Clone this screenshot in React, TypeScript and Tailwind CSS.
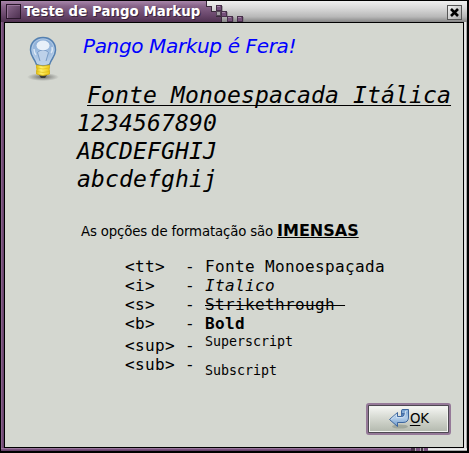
const TILES = [
  [14, 4], [19, 10], [25, 15], [35, 15],
];

function PixelTrail() {
  return (
    <svg width="46" height="21" viewBox="0 0 46 21" shapeRendering="crispEdges" className="shrink-0">
      <defs>
        <linearGradient id="trail" gradientUnits="userSpaceOnUse" x1="0" y1="0" x2="0" y2="21">
          <stop offset="0" stopColor="#a886aa" />
          <stop offset=".25" stopColor="#866388" />
          <stop offset=".65" stopColor="#6b486d" />
          <stop offset="1" stopColor="#503251" />
        </linearGradient>
      </defs>
      <path d="M0 0H4V5H9V10H14V15H19V21H0Z" fill="url(#trail)" />
      <path d="M4.500 0V5.500H9.500V10.500H14.500V15.500H19.500V21" fill="none" stroke="#3b2a3c" />
      <rect x="14" y="10" width="5" height="5" fill="#554657" />
      <rect x="15" y="11" width="3" height="3" fill="#a39da4" />
      {TILES.map(([x, y]) => (
        <g key={`${x}-${y}`}>
          <rect x={x + 1} y={y + 1} width="6" height="5" fill="#777077" opacity=".55" />
          <rect x={x} y={y} width="6" height="6" fill="#47304a" />
          <rect x={x + 1} y={y + 1} width="4" height="4" fill="#75507a" />
          <rect x={x + 1} y={y + 1} width="3" height="1" fill="#a283a5" />
        </g>
      ))}
    </svg>
  );
}

function Bulb() {
  return (
    <svg width="34" height="46" viewBox="0 0 34 46" className="shrink-0">
      <defs>
        <linearGradient id="glass" x2="0" y2="1">
          <stop offset="0" stopColor="#86a9d3" />
          <stop offset=".5" stopColor="#9fbde0" />
          <stop offset="1" stopColor="#c3d7ec" />
        </linearGradient>
        <linearGradient id="brass">
          <stop offset="0" stopColor="#e0bd10" />
          <stop offset=".35" stopColor="#fff06a" />
          <stop offset="1" stopColor="#ecc816" />
        </linearGradient>
        <radialGradient id="shade">
          <stop offset="0" stopColor="#333" stopOpacity=".65" />
          <stop offset="1" stopColor="#333" stopOpacity="0" />
        </radialGradient>
      </defs>
      <ellipse cx="17" cy="41" rx="16" ry="4" fill="url(#shade)" />
      <path d="M13 39h8l-2 3h-4z" fill="#3c3c36" />
      <path d="M4.500 14C4.500 6 10 1.500 17 1.500S29.500 6 29.500 14C29.500 20.500 25.500 22 23.500 28.500Q17 31.500 10.500 28.500C8.500 22 4.500 20.500 4.500 14Z" fill="url(#glass)" stroke="#5580b0" strokeWidth="1.5" />
      <path d="M6 14C6 7 11 3 17 3S28 7 28 14C28 19 24 22 22.500 27.500Q17 29.500 11.500 27.500C10 22 6 19 6 14Z" fill="none" stroke="#b9cfe9" strokeWidth=".8" />
      <path d="M14 25L11.500 16.500L14 14.500H20L22.500 16.500L20 25" fill="#bdd1e9" stroke="#789bc6" strokeWidth="1" />
      <ellipse cx="17" cy="9.500" rx="6.500" ry="5" fill="#e8f0f9" />
      <path d="M8 13q0 4 2 6M26 11q1 4-1 6" fill="none" stroke="#e8f1fa" strokeWidth="1.500" opacity=".8" />
      <path d="M10.500 29Q17 31 23.500 29V32L23 33L23.500 35V38Q17 41 10.500 38V35L11 33L10.500 32Z" fill="url(#brass)" stroke="#d4b012" strokeWidth=".8" />
      <path d="M11 32Q17 34 23 32M11 35.500Q17 37.500 23 35.500" fill="none" stroke="#dcb914" strokeWidth=".6" />
    </svg>
  );
}

function ReturnArrow() {
  return (
    <svg width="22" height="20" viewBox="0 0 22 20" className="shrink-0">
      <defs>
        <linearGradient id="arrow" x2="0" y2="1">
          <stop offset="0" stopColor="#719fd0" />
          <stop offset=".5" stopColor="#b4cfea" />
          <stop offset="1" stopColor="#6c98ca" />
        </linearGradient>
      </defs>
      <ellipse cx="12" cy="17.500" rx="8" ry="2" fill="#7c8479" opacity=".45" />
      <path d="M1.500 10.500L9.500 3.500V7.500H13.500V1.500Q13.500 .5 15 .5H20.500V8Q20.500 13.500 15 13.500H9.500V17.500Z" fill="url(#arrow)" stroke="#3c659d" strokeLinejoin="round" />
      <path d="M13.500 7.500H14.500Q16.500 7 16.500 4.500H13.500" fill="#527fb7" stroke="#3c659d" strokeWidth=".8" />
      <path d="M3 10.500L8.500 5.300V8.600H14.500Q17.500 8 17.500 4V2H19.500" fill="none" stroke="#d3e3f3" strokeWidth=".9" />
    </svg>
  );
}

function TitleBar() {
  return (
    <div className="flex h-[21px] items-center bg-[linear-gradient(#f0f0f0,#d9d9d9_35%,#b8b8b8_75%,#858585)]">
      <div className="flex h-full w-[201px] items-center bg-[linear-gradient(#a886aa,#866388_25%,#6b486d_65%,#503251)] pl-[5px]">
        <div className="h-[15px] w-[15px] border border-[#2b182c] bg-[linear-gradient(135deg,#8a688c,#4d3050)] shadow-[inset_1px_1px_0_#98769a]" />
        <div className="ml-[3px] whitespace-pre text-[13.3px] leading-[20px] font-bold tracking-[0.06px] text-white [text-shadow:1px_1px_0_#3a243b]">Teste de Pango Markup</div>
      </div>
      <PixelTrail />
      <div className="mt-px mr-[5px] ml-auto flex h-[15px] w-[15px] items-center justify-center border border-[#555] bg-[linear-gradient(135deg,#f2f2f2,#aaa)]">
        <svg width="9" height="9" viewBox="0 0 9 9">
          <path d="M1 1L8 8M8 1L1 8" stroke="#000" strokeWidth="2.600" />
        </svg>
      </div>
    </div>
  );
}

const cell = "whitespace-pre";

export default function App() {
  return (
    <div className="flex h-[453px] w-[469px] flex-col bg-black pt-px pr-[2px] pb-[2px] pl-px font-['DejaVu_Sans',sans-serif] text-black">
      <TitleBar />
      <div className="flex h-[426px]">
        <div className="w-[3px] bg-[linear-gradient(90deg,#947296,#79507d_40%,#644067)]" />
        <main className="flex h-[426px] w-[460px] flex-col border border-black bg-[#d4d7d0]">
          <div className="flex h-[347px]">
            <div className="w-[72px] pt-[13px] pl-[21px]"><Bulb /></div>
            <div className="flex flex-col whitespace-pre">
              <div className="mt-[10px] ml-[6px] h-[26px] text-[20px] leading-[26px] tracking-[-0.36px] text-[#0000ff] italic">Pango Markup é Fera!</div>
              <div className="mt-[22px] h-[112px] font-['DejaVu_Sans_Mono',monospace] text-[23px] leading-[28px] tracking-[0.154px] italic">
                <div className="ml-[10px] underline decoration-1 underline-offset-[2px] [text-decoration-skip-ink:none]">Fonte Monoespacada Itálica</div>
                <div>1234567890</div>
                <div>ABCDEFGHIJ</div>
                <div>abcdefghij</div>
              </div>
              <div className="mt-[28px] ml-[4px] flex h-[20px] items-baseline leading-[20px]">
                <span className="text-[13.3px] tracking-[-0.15px]">As opções de formatação são </span>
                <span className="text-[16px] font-bold underline decoration-1 underline-offset-[1px]">IMENSAS</span>
              </div>
              <div className="mt-[16px] ml-[48px] grid w-max grid-cols-[60px_20px_auto] grid-rows-[19px_19px_19px_19px_22px_19px] font-['DejaVu_Sans_Mono',monospace] text-[16px] leading-[19px] tracking-[0.37px]">
                <span className={cell}>&lt;tt&gt;</span><span>-</span><span className={cell}>Fonte Monoespaçada</span>
                <span className={cell}>&lt;i&gt;</span><span>-</span><span className="italic">Italico</span>
                <span className={cell}>&lt;s&gt;</span><span>-</span><span className="whitespace-pre line-through decoration-1">Strikethrough </span>
                <span className={cell}>&lt;b&gt;</span><span>-</span><span className="font-bold">Bold</span>
                <span className="pt-[3px]">&lt;sup&gt;</span><span className="pt-[3px]">-</span><span className="text-[13.3px] leading-[17px] tracking-normal">Superscript</span>
                <span className={cell}>&lt;sub&gt;</span><span>-</span><span className="pt-[7px] text-[13.3px] leading-[17px] tracking-normal">Subscript</span>
              </div>
            </div>
          </div>
          <div className="mt-[33px] mr-[12px] ml-auto flex h-[32px] w-[85px] rounded-[3px] border-2 border-[#957998] bg-[#4d4851] p-px">
            <button className="flex flex-1 items-center justify-center border border-[#f1f3ef] bg-[linear-gradient(#f4f5f2,#d9dcd5_40%,#b5bbb0)] text-[13.3px] leading-[18px]">
              <ReturnArrow /><span><span className="underline decoration-1 underline-offset-[2px]">O</span>K</span>
            </button>
          </div>
        </main>
        <div className="w-[3px] bg-[linear-gradient(90deg,#d8d8d8,#f0f0f0_45%,#888)]" />
      </div>
      <div className="flex h-[3px]">
        <div className="w-[410px] bg-[linear-gradient(#aa89ac,#79507d_50%,#5b395e)]" />
        <div className="w-[4px] bg-[#493249]" /><div className="w-px bg-[#aaa]" /><div className="w-[4px] bg-[#79507d]" /><div className="w-px bg-[#aaa]" /><div className="w-[2px] bg-[#493249]" /><div className="w-px bg-[#aaa]" /><div className="w-[4px] bg-[#79507d]" />
        <div className="flex-1 bg-[linear-gradient(#ddd,#eee_50%,#888)]" />
      </div>
    </div>
  );
}
